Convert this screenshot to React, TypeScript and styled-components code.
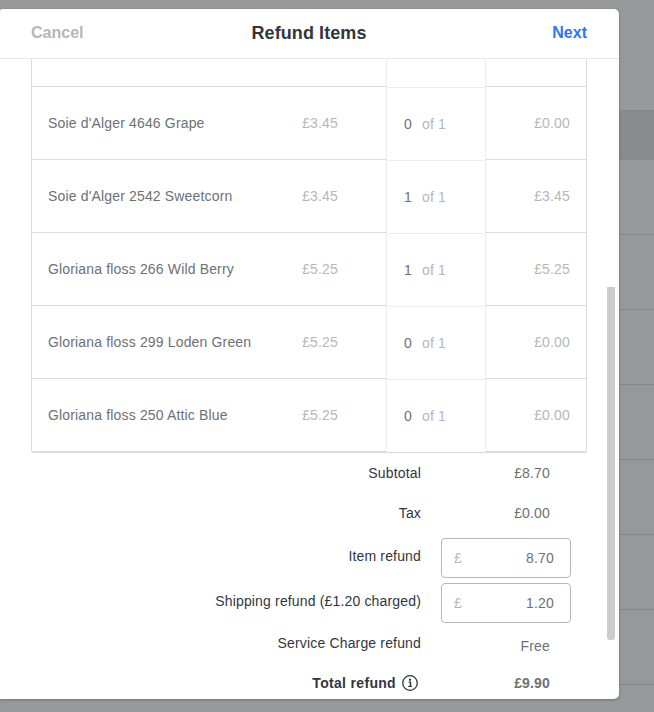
import styled, { createGlobalStyle } from 'styled-components';

const GlobalStyle = createGlobalStyle`
  html, body {
    margin: 0;
    padding: 0;
    height: 100%;
    overflow: hidden;
    background: #979899;
    font-family: 'Liberation Sans', Arial, sans-serif;
  }
`;

const items = [
  { name: "Soie d'Alger 4646 Grape", price: '£3.45', qty: 0, total: '£0.00' },
  { name: "Soie d'Alger 2542 Sweetcorn", price: '£3.45', qty: 1, total: '£3.45' },
  { name: 'Gloriana floss 266 Wild Berry', price: '£5.25', qty: 1, total: '£5.25' },
  { name: 'Gloriana floss 299 Loden Green', price: '£5.25', qty: 0, total: '£0.00' },
  { name: 'Gloriana floss 250 Attic Blue', price: '£5.25', qty: 0, total: '£0.00' },
];

const Page = styled.div`
  width: 654px;
  height: 712px;
  position: relative;
  overflow: hidden;
  background: #979899;
`;

const BackdropList = styled.div`
  padding-top: 110px;
  display: flex;
  flex-direction: column;
`;

const BackdropRow = styled.div<{ $selected?: boolean }>`
  height: ${(p) => (p.$selected ? 48 : 74)}px;
  border-top: 1px solid #868788;
  background: ${(p) => (p.$selected ? '#888b8e' : 'transparent')};
`;

const Modal = styled.div`
  position: absolute;
  left: 0;
  top: 9px;
  width: 619px;
  height: 690px;
  background: #fff;
  border-radius: 2px 5px 5px 0;
  overflow: hidden;
  box-shadow: 0 1px 3px rgba(0, 0, 0, 0.25);
`;

const Header = styled.div`
  height: 50px;
  box-sizing: border-box;
  border-bottom: 1px solid #e6e7e8;
  padding: 0 32px 0 31px;
  display: grid;
  grid-template-columns: 1fr auto 1fr;
  align-items: center;
`;

const HeaderButton = styled.span<{ $primary?: boolean }>`
  font-size: 16px;
  font-weight: 700;
  color: ${(p) => (p.$primary ? '#2f75f0' : '#b5b7ba')};
  margin-top: -2px;
  text-align: ${(p) => (p.$primary ? 'right' : 'left')};
`;

const Title = styled.span`
  font-size: 18px;
  font-weight: 700;
  letter-spacing: 0.08px;
  color: #31373d;
`;

const Body = styled.div`
  padding: 0 32px 0 31px;
  letter-spacing: 0.16px;
`;

const Table = styled.div`
  width: 556px;
  box-sizing: border-box;
  border: 1px solid #d9dbdd;
  border-top: none;
  border-radius: 0 0 3px 3px;
`;

const Row = styled.div<{ $head?: boolean }>`
  display: grid;
  grid-template-columns: 354px 100px 100px;
  height: ${(p) => (p.$head ? 28 : 73)}px;
`;

const ItemCell = styled.div`
  display: flex;
  align-items: center;
  justify-content: space-between;
  box-sizing: border-box;
  padding: 0 48px 0 16px;
  border-bottom: 1px solid #d9dbdd;
  font-size: 14px;
  color: #6d7175;
`;

const Price = styled.span`
  color: #b5b7ba;
`;

const QtyCell = styled.div`
  display: flex;
  align-items: center;
  box-sizing: border-box;
  padding: 0 0 0 17px;
  border-left: 1px solid #eceded;
  border-right: 1px solid #eceded;
  border-top: 1px solid #eceded;
  font-size: 14px;
  color: #6d7175;
  gap: 10px;
`;

const OfLabel = styled.span`
  color: #b5b7ba;
`;

const TotalCell = styled.div`
  display: flex;
  align-items: center;
  justify-content: flex-end;
  box-sizing: border-box;
  padding-right: 16px;
  border-bottom: 1px solid #d9dbdd;
  font-size: 14px;
  color: #b5b7ba;
`;

const HeadSpacer = styled.div<{ $qty?: boolean }>`
  box-sizing: border-box;
  border-bottom: ${(p) => (p.$qty ? 'none' : '1px solid #d9dbdd')};
  border-left: ${(p) => (p.$qty ? '1px solid #eceded' : 'none')};
  border-right: ${(p) => (p.$qty ? '1px solid #eceded' : 'none')};
`;

const Summary = styled.div`
  display: grid;
  grid-template-columns: 390px 130px;
  column-gap: 20px;
  grid-auto-rows: min-content;
`;

const Label = styled.div<{ $h: number; $bold?: boolean; $up?: number }>`
  height: ${(p) => p.$h}px;
  display: flex;
  align-items: center;
  justify-content: flex-end;
  gap: 6px;
  font-size: 14px;
  font-weight: ${(p) => (p.$bold ? 700 : 400)};
  letter-spacing: ${(p) => (p.$bold ? 0.32 : 0.16)}px;
  color: #31373d;
  padding-bottom: ${(p) => p.$up ?? 0}px;
  box-sizing: border-box;
`;

const Value = styled.div<{ $h: number; $bold?: boolean; $up?: number; $down?: number }>`
  height: ${(p) => p.$h}px;
  display: flex;
  align-items: center;
  justify-content: flex-end;
  padding-right: 21px;
  padding-bottom: ${(p) => p.$up ?? 0}px;
  padding-top: ${(p) => p.$down ?? 0}px;
  box-sizing: border-box;
  font-size: 14px;
  font-weight: ${(p) => (p.$bold ? 700 : 400)};
  color: #6d7175;
`;

const MoneyField = styled.div<{ $h: number }>`
  height: ${(p) => p.$h}px;
`;

const MoneyBox = styled.div`
  height: 40px;
  box-sizing: border-box;
  border: 1px solid #b5b7ba;
  border-radius: 4px;
  padding: 0 16px 0 12px;
  display: flex;
  align-items: center;
  justify-content: space-between;
  font-size: 14px;
  color: #6d7175;
`;

const Currency = styled.span`
  color: #b5b7ba;
`;

const InfoSvg = styled.svg`
  margin-right: 3px;
`;

const Scrollbar = styled.div`
  position: absolute;
  left: 607px;
  top: 278px;
  width: 8px;
  height: 353px;
  border-radius: 0 0 3px 3px;
  background: #cccccc;
`;

function InfoIcon() {
  return (
    <InfoSvg width="16" height="16" viewBox="0 0 16 16" fill="none">
      <circle cx="8" cy="8" r="7.3" stroke="#31373d" strokeWidth="1.3" />
      <path d="M6.6 7.1h1.9v4.1M6.3 11.4h3.6" stroke="#31373d" strokeWidth="1.4" />
      <rect x="7" y="3.7" width="2" height="2" fill="#31373d" />
    </InfoSvg>
  );
}

export default function App() {
  return (
    <Page>
      <GlobalStyle />
      <BackdropList>
        <BackdropRow $selected />
        {Array.from({ length: 8 }).map((_, i) => (
          <BackdropRow key={i} />
        ))}
      </BackdropList>
      <Modal>
        <Header>
          <HeaderButton>Cancel</HeaderButton>
          <Title>Refund Items</Title>
          <HeaderButton $primary>Next</HeaderButton>
        </Header>
        <Body>
          <Table>
            <Row $head>
              <HeadSpacer />
              <HeadSpacer $qty />
              <HeadSpacer />
            </Row>
            {items.map((item) => (
              <Row key={item.name}>
                <ItemCell>
                  <span>{item.name}</span>
                  <Price>{item.price}</Price>
                </ItemCell>
                <QtyCell>
                  <span>{item.qty}</span>
                  <OfLabel>of 1</OfLabel>
                </QtyCell>
                <TotalCell>{item.total}</TotalCell>
              </Row>
            ))}
          </Table>
          <Summary>
            <Label $h={40}>Subtotal</Label>
            <Value $h={40}>£8.70</Value>
            <Label $h={45} $up={5}>Tax</Label>
            <Value $h={45} $up={5}>£0.00</Value>
            <Label $h={45} $up={9}>Item refund</Label>
            <MoneyField $h={45}>
              <MoneyBox>
                <Currency>£</Currency>
                <span>8.70</span>
              </MoneyBox>
            </MoneyField>
            <Label $h={40} $up={4}>Shipping refund (£1.20 charged)</Label>
            <MoneyField $h={40}>
              <MoneyBox>
                <Currency>£</Currency>
                <span>1.20</span>
              </MoneyBox>
            </MoneyField>
            <Label $h={40}>Service Charge refund</Label>
            <Value $h={40} $down={6}>Free</Value>
            <Label $h={40} $bold>
              Total refund
              <InfoIcon />
            </Label>
            <Value $h={40} $bold>£9.90</Value>
          </Summary>
        </Body>
        <Scrollbar />
      </Modal>
    </Page>
  );
}
